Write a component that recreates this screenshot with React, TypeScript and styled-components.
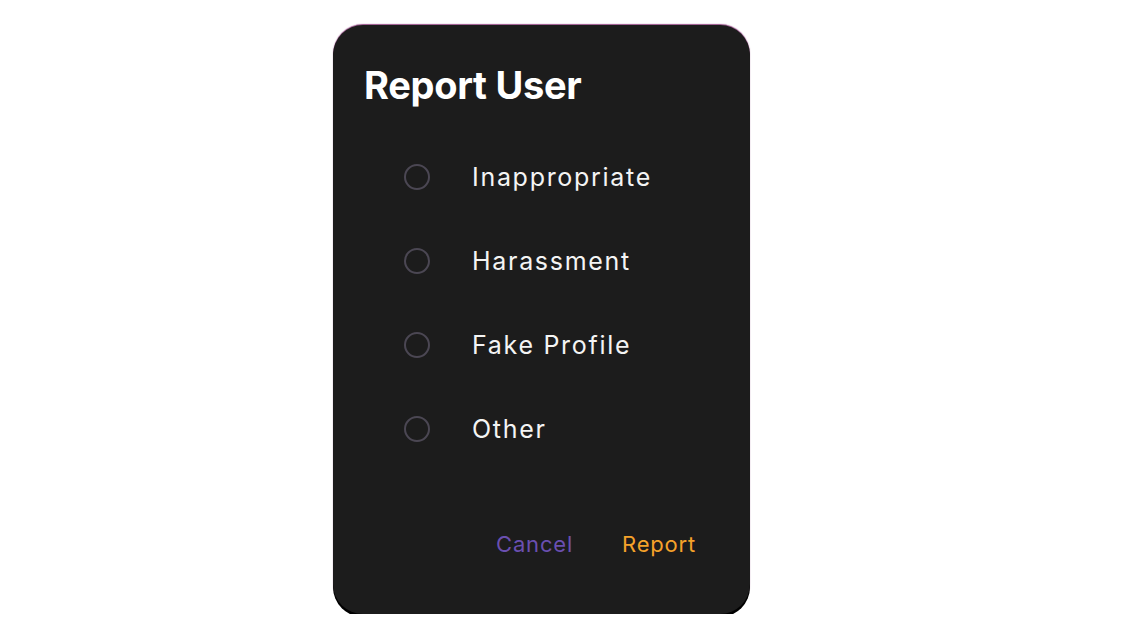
import styled, { createGlobalStyle } from "styled-components";

const GlobalStyle = createGlobalStyle`
  body {
    margin: 0;
    background: #ffffff;
    font-family: Inter, "Noto Sans", sans-serif;
  }
`;

const Page = styled.div`
  padding: 25px 0 0 333px;
`;

const Dialog = styled.div`
  width: 417px;
  height: 589px;
  box-sizing: border-box;
  background: #1c1c1c;
  border-radius: 30px;
  box-shadow: 0 3px 0 #000000, 0 -1px 1px rgba(110, 10, 90, 0.7);
  padding: 38px 31px 0 31px;
  display: flex;
  flex-direction: column;
`;

const Title = styled.h1`
  margin: 0;
  color: #ffffff;
  font-size: 38px;
  font-weight: 700;
  letter-spacing: -0.3px;
  line-height: 44px;
`;

const Options = styled.div`
  display: flex;
  flex-direction: column;
  margin-top: 28px;
  padding-left: 40px;
`;

const Option = styled.label`
  display: flex;
  align-items: center;
  height: 84px;
  gap: 42px;
  cursor: pointer;
`;

const Radio = styled.span`
  width: 26px;
  height: 26px;
  box-sizing: border-box;
  border: 2px solid #4b4753;
  border-radius: 50%;
  flex: none;
`;

const OptionText = styled.span`
  color: #f4f4f4;
  font-size: 25px;
  font-weight: 400;
  letter-spacing: 1.7px;
`;

const Actions = styled.div`
  display: flex;
  justify-content: flex-end;
  gap: 49px;
  margin-top: 60px;
  padding-right: 23px;
`;

const ActionButton = styled.button<{ $tone: string }>`
  background: none;
  border: none;
  padding: 0;
  font-family: inherit;
  font-size: 22px;
  letter-spacing: 0.8px;
  color: ${(p) => p.$tone};
  cursor: pointer;
`;

const reasons = ["Inappropriate", "Harassment", "Fake Profile", "Other"];

export default function App() {
  return (
    <>
      <GlobalStyle />
      <Page>
        <Dialog>
          <Title>Report User</Title>
          <Options>
            {reasons.map((r) => (
              <Option key={r}>
                <Radio />
                <OptionText>{r}</OptionText>
              </Option>
            ))}
          </Options>
          <Actions>
            <ActionButton $tone="#6a4fb0">Cancel</ActionButton>
            <ActionButton $tone="#f5a22a">Report</ActionButton>
          </Actions>
        </Dialog>
      </Page>
    </>
  );
}
